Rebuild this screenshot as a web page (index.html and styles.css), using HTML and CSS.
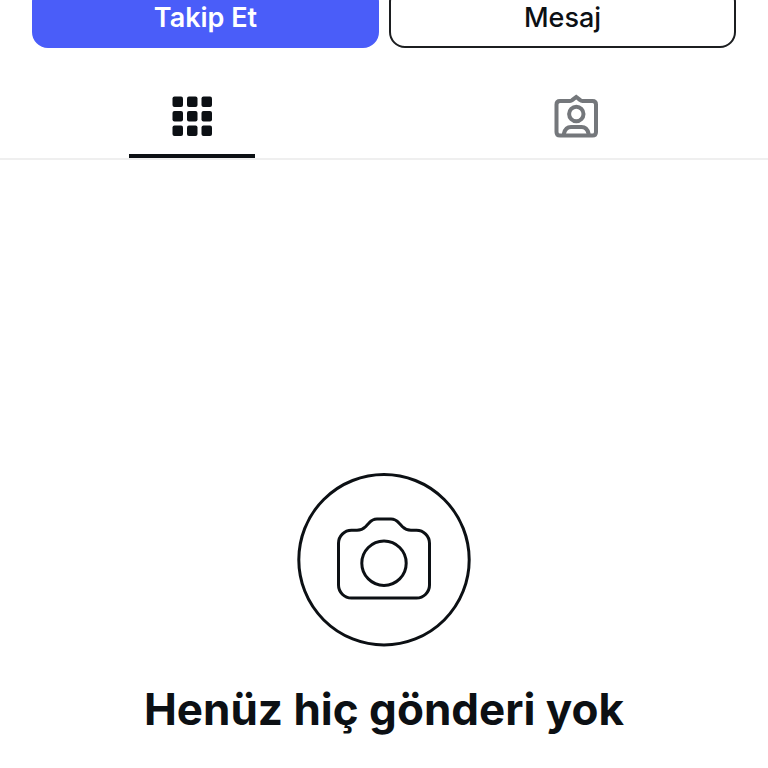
FILE: index.html
```html
<!DOCTYPE html>
<html lang="tr">
<head>
    <meta charset="UTF-8">
    <meta name="viewport" content="width=device-width, initial-scale=1.0">
    <title>Profil</title>
    <link rel="stylesheet" href="styles.css">
</head>
<body>

    <div class="actions">
        <button type="button" class="btn primary">Takip Et</button>
        <button type="button" class="btn">Mesaj</button>
    </div>

    <nav class="tabs">
        <button type="button" class="tab active" aria-label="Gönderiler">
            <svg class="icon-grid" viewBox="0 0 40 40">
                <rect x="0.5" y="0.5" width="10.5" height="10.5" rx="2"/>
                <rect x="15" y="0.5" width="10.5" height="10.5" rx="2"/>
                <rect x="29.5" y="0.5" width="10.5" height="10.5" rx="2"/>
                <rect x="0.5" y="15" width="10.5" height="10.5" rx="2"/>
                <rect x="15" y="15" width="10.5" height="10.5" rx="2"/>
                <rect x="29.5" y="15" width="10.5" height="10.5" rx="2"/>
                <rect x="0.5" y="29.5" width="10.5" height="10.5" rx="2"/>
                <rect x="15" y="29.5" width="10.5" height="10.5" rx="2"/>
                <rect x="29.5" y="29.5" width="10.5" height="10.5" rx="2"/>
            </svg>
        </button>
        <button type="button" class="tab" aria-label="Etiketlenenler">
            <svg class="icon-tagged" viewBox="0 0 44 44">
                <path d="M6 7H16Q17.3 7 18.2 6.1L22.2 3L26.2 6.1Q27.1 7 28.4 7H38.5Q42 7 42 10.5V38Q42 41.5 38.5 41.5H6Q2.5 41.5 2.5 38V10.5Q2.5 7 6 7Z"/>
                <circle cx="22.3" cy="20" r="7.2"/>
                <path d="M10 41V39.5Q11.5 33 17 33H27.5Q33 33 34.5 39.5V41"/>
            </svg>
        </button>
    </nav>

    <main class="empty">
        <svg class="icon-camera" viewBox="0 0 174 174">
            <circle cx="87" cy="86.7" r="85.2"/>
            <path d="M54.5 57.3H60Q65 57.3 68.5 53.8L72 50Q75.5 46 80 46H94Q98.5 46 102 50L105.5 53.8Q109 57.3 114 57.3H119.5A13 13 0 0 1 132.5 70.3V112A13 13 0 0 1 119.5 125H54.5A13 13 0 0 1 41.5 112V70.3A13 13 0 0 1 54.5 57.3Z"/>
            <circle cx="87" cy="90.2" r="22.2"/>
        </svg>
        <h1>Henüz hiç gönderi yok</h1>
    </main>

</body>
</html>
```
FILE: styles.css
```css
:root {
    --bg-color: #ffffff;
    --text-color: #0c1014;
    --muted-color: #74777b;
    --line-color: #efefef;
    --primary-color: #4a5df9;
    --font-main: 'Inter', 'Liberation Sans', sans-serif;
}

body {
    margin: 0;
    overflow-x: hidden;
    font-family: var(--font-main);
    background-color: var(--bg-color);
    color: var(--text-color);
}

/* Follow and message buttons, partly scrolled off the top */
.actions {
    display: flex;
    gap: 10px;
    margin-top: -14px;
    padding: 0 32px;
}

.btn {
    flex: 1;
    height: 62px;
    padding: 0;
    border: 2px solid #1c1e20;
    border-radius: 16px;
    background-color: var(--bg-color);
    color: var(--text-color);
    font-family: var(--font-main);
    font-size: 27px;
    font-weight: 500;
    cursor: pointer;
}

.btn.primary {
    border-color: var(--primary-color);
    background-color: var(--primary-color);
    color: #fff;
    font-weight: 600;
}

/* Tabs */
.tabs {
    display: flex;
    margin-top: 32px;
    border-bottom: 2px solid var(--line-color);
}

.tab {
    flex: 1;
    display: flex;
    flex-direction: column;
    align-items: center;
    justify-content: space-between;
    height: 78px;
    padding: 14px 0 0;
    border: none;
    background: none;
    color: var(--muted-color);
    cursor: pointer;
}

.tab.active {
    padding-top: 16px;
    color: var(--text-color);
}

.tab.active::after {
    content: "";
    width: 126px;
    height: 4px;
    background-color: var(--text-color);
}

.icon-grid {
    width: 40px;
    height: 40px;
    fill: currentColor;
}

.icon-tagged {
    width: 44px;
    height: 44px;
    fill: none;
    stroke: currentColor;
    stroke-width: 4;
}

/* Empty state */
.empty {
    display: flex;
    flex-direction: column;
    align-items: center;
    padding: 313px 32px 32px;
    text-align: center;
}

.icon-camera {
    width: 174px;
    height: 174px;
    fill: none;
    stroke: var(--text-color);
    stroke-width: 3;
}

h1 {
    margin: 34px 0 0;
    font-size: 44px;
    font-weight: 700;
    line-height: 56px;
}
```
